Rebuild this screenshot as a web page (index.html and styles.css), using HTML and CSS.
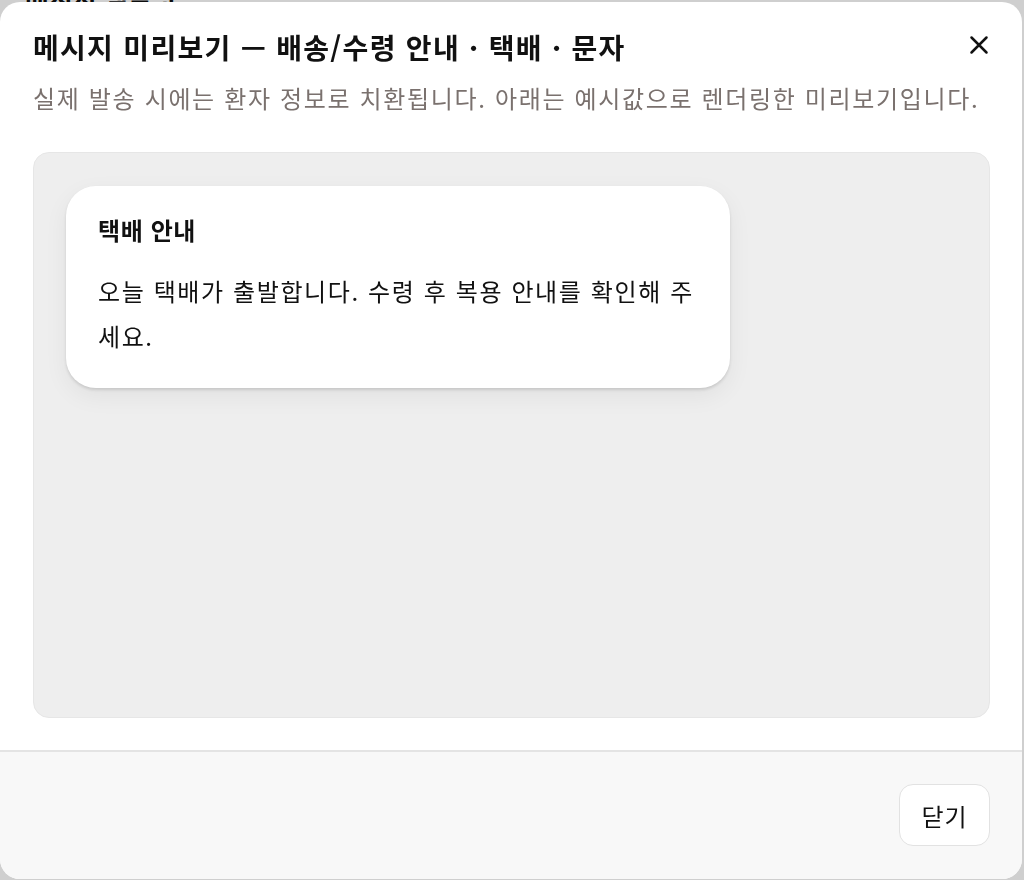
FILE: index.html
```html
<!DOCTYPE html>
<html lang="ko">
<head>
  <meta charset="UTF-8" />
  <meta name="viewport" content="width=device-width, initial-scale=1.0"/>
  <title>메시지 미리보기</title>
  <link rel="stylesheet" href="styles.css">
</head>
<body>

  <!-- Page behind the modal -->
  <div class="page">
    <h2 class="page-title">메시지 템플릿</h2>
  </div>

  <!-- Preview modal -->
  <div class="overlay">
    <div class="modal">
      <div class="modal-header">
        <div class="modal-head-row">
          <h1 class="modal-title">메시지 미리보기 — 배송/수령 안내 · 택배 · 문자</h1>
          <button class="close-btn" aria-label="닫기">
            <svg width="24" height="24" viewBox="0 0 24 24" fill="none" stroke="#111" stroke-width="2.5" stroke-linecap="round">
              <path d="M4.5 4.5L19.5 19.5M19.5 4.5L4.5 19.5"/>
            </svg>
          </button>
        </div>
        <p class="modal-desc">실제 발송 시에는 환자 정보로 치환됩니다. 아래는 예시값으로 렌더링한 미리보기입니다.</p>
      </div>

      <div class="modal-body">
        <div class="preview">
          <div class="bubble">
            <div class="bubble-title">택배 안내</div>
            <div class="bubble-text">오늘 택배가 출발합니다. 수령 후 복용 안내를 확인해 주세요.</div>
          </div>
        </div>
      </div>

      <div class="modal-footer">
        <button class="btn">닫기</button>
      </div>
    </div>
  </div>

</body>
</html>
```

FILE: styles.css
```css
body {
  font-family: "Noto Sans CJK KR", "Noto Sans", sans-serif;
  margin: 0;
  background: #fff;
  color: #111;
}

.page {
  padding: 0 25px;
}

.page-title {
  margin: -22px 0 0;
  font-size: 26px;
  font-weight: 700;
}

/* Modal */
.overlay {
  position: fixed;
  top: 0; left: 0;
  width: 100%; height: 100%;
  background-color: rgba(0,0,0,0.19);
  display: flex;
  justify-content: center;
  align-items: center;
}

.modal {
  width: 1022px;
  height: 877px;
  margin-right: 2px;
  background: #fff;
  border-radius: 20px;
  display: flex;
  flex-direction: column;
  overflow: hidden;
}

.modal-header {
  padding: 22px 31px 0 33px;
}

.modal-head-row {
  display: flex;
  justify-content: space-between;
  align-items: flex-start;
}

.modal-title {
  margin: 0;
  font-size: 28px;
  font-weight: 700;
  line-height: 46px;
  letter-spacing: 1.3px;
}

.modal-desc {
  margin: 10px 0 0;
  font-size: 24px;
  line-height: 36px;
  letter-spacing: 1.65px;
  color: #7a716e;
  white-space: nowrap;
}

.close-btn {
  border: none;
  background: none;
  padding: 0;
  margin-top: 9px;
  width: 24px;
  height: 24px;
  cursor: pointer;
}

.modal-body {
  flex: 1;
  padding: 36px 32px 32px 33px;
  display: flex;
}

.preview {
  flex: 1;
  background: #eeeeee;
  border: 1px solid #e6e6e6;
  border-radius: 16px;
  padding: 33px 32px;
  display: flex;
  align-items: flex-start;
}

.bubble {
  width: 600px;
  background: #fff;
  border-radius: 30px;
  padding: 26px 32px 30px;
  box-shadow: 0 2px 3px rgba(0,0,0,0.12), 0 8px 24px rgba(0,0,0,0.06);
}

.bubble-title {
  font-size: 24px;
  font-weight: 700;
  line-height: 36px;
  letter-spacing: 0.6px;
  margin-bottom: 20px;
}

.bubble-text {
  font-size: 24px;
  line-height: 45px;
  letter-spacing: 1.6px;
}

.modal-footer {
  height: 129px;
  box-sizing: border-box;
  border-top: 2px solid #e4e4e4;
  background: #f8f8f8;
  display: flex;
  justify-content: flex-end;
  align-items: center;
  padding: 0 32px;
}

.btn {
  font-family: inherit;
  font-size: 24px;
  letter-spacing: 1px;
  color: #111;
  background: #fff;
  border: 1px solid #e2e2e2;
  border-radius: 14px;
  width: 91px;
  height: 62px;
  cursor: pointer;
}
```
